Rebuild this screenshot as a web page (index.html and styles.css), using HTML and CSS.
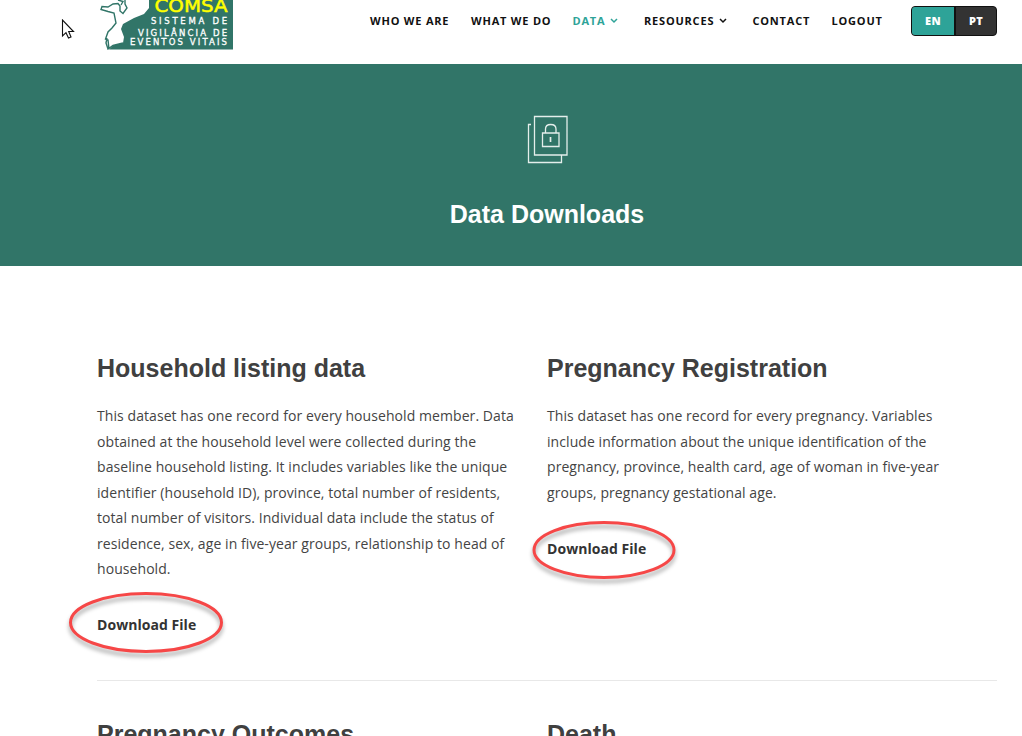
FILE: index.html
```html
<!DOCTYPE html>
<html lang="en">
<head>
<meta charset="utf-8">
<title>Data Downloads</title>
<link rel="stylesheet" href="styles.css">
</head>
<body>
<header class="header">
  <svg class="logo" width="136" height="50" viewBox="0 0 136 50">
    <path class="logo-green" d="M52 0H136V49.500H12L16 45.500L26 43L27 37L24 29L26 24L37 18L47 14L52 8Z"/>
    <path class="map-line" d="M12 49L11 40L8.500 39L11 32L15 28L19 23L17 13L11 11.500L4 9.500L5 6.500L11 7L16 4L21 3.500L23 6V11L26 13.500L30 8L28 4V0M21 0L26 1.500L24 5M10 38L9 43L11 49L16 45.500L26 43"/>
    <text class="logo-name" x="57.500" y="11.800" textLength="73" lengthAdjust="spacingAndGlyphs">COMSA</text>
    <text class="logo-text" x="54" y="24.200" textLength="76" lengthAdjust="spacing">SISTEMA DE</text>
    <text class="logo-text" x="41" y="35.500" textLength="89" lengthAdjust="spacing">VIGILÂNCIA DE</text>
    <text class="logo-text" x="33" y="45.300" textLength="97" lengthAdjust="spacing">EVENTOS VITAIS</text>
  </svg>
  <nav class="nav">
    <a class="nav-item who">WHO WE ARE</a>
    <a class="nav-item what">WHAT WE DO</a>
    <a class="nav-item data">DATA<svg class="chevron" width="8" height="6" viewBox="0 0 8 6"><path d="M1 1L4 4L7 1"/></svg></a>
    <a class="nav-item resources">RESOURCES<svg class="chevron" width="8" height="6" viewBox="0 0 8 6"><path d="M1 1L4 4L7 1"/></svg></a>
    <a class="nav-item contact">CONTACT</a>
    <a class="nav-item logout">LOGOUT</a>
    <div class="languages"><a class="lang active">EN</a><a class="lang">PT</a></div>
  </nav>
</header>
<section class="hero">
  <svg class="hero-icon" width="42" height="50" viewBox="0 0 42 50">
    <path d="M7.500 1.500H40V40H7.500ZM4 9.500H1.500V47.500H34.500V40M15.500 18H32V31.500H15.500ZM18.500 18V14Q18.500 9.500 23.700 9.500Q29 9.500 29 14V18"/>
    <path class="keyhole" d="M23.500 22V27"/>
  </svg>
  <h1 class="hero-title">Data Downloads</h1>
</section>
<main class="content">
  <div class="row">
    <article class="dataset">
      <h2 class="title">Household listing data</h2>
      <p class="description">This dataset has one record for every household member. Data obtained at the household level were collected during the baseline household listing. It includes variables like the unique identifier (household ID), province, total number of residents, total number of visitors. Individual data include the status of residence, sex, age in five-year groups, relationship to head of household.</p>
      <div class="download"><a>Download File</a><svg class="ring ring-left" width="164" height="76" viewBox="0 0 164 76"><ellipse cx="80" cy="34.500" rx="75.500" ry="29"/></svg></div>
    </article>
    <article class="dataset">
      <h2 class="title">Pregnancy Registration</h2>
      <p class="description">This dataset has one record for every pregnancy. Variables include information about the unique identification of the pregnancy, province, health card, age of woman in five-year groups, pregnancy gestational age.</p>
      <div class="download second"><a>Download File</a><svg class="ring ring-right" width="154" height="74" viewBox="0 0 154 74"><ellipse cx="75" cy="33" rx="70" ry="27.500"/></svg></div>
    </article>
  </div>
  <div class="row next">
    <article class="dataset"><h2 class="title">Pregnancy Outcomes</h2></article>
    <article class="dataset"><h2 class="title">Death</h2></article>
  </div>
</main>
<svg class="cursor" width="14" height="21" viewBox="0 0 14 21"><path d="M1.500 1V17L5 13.700L7.500 19L10 18L7.700 12.500H12.500Z"/></svg>
</body>
</html>
```
FILE: styles.css
```css
* { box-sizing: border-box; }
body { margin: 0; height: 736px; overflow: hidden; position: relative; background: #fff; color: #444; font-family: "Open Sans", sans-serif; }
.header { height: 64px; padding: 0 25px 0 97px; display: flex; justify-content: space-between; align-items: flex-start; }
.logo { display: block; }
.logo-green { fill: #317568; }
.map-line { fill: none; stroke: #317568; stroke-width: 1.4; }
.logo-name { fill: #ff0; stroke: #ff0; stroke-width: .5; font: 18px "DejaVu Sans", sans-serif; }
.logo-text { fill: #fff; stroke: #fff; stroke-width: .3; font: 8.5px "DejaVu Sans", sans-serif; }
.nav { display: flex; align-items: center; padding-top: 6px; height: 36px; }
.nav-item { color: #111; font-size: 11px; font-weight: 700; line-height: 30px; letter-spacing: .8px; white-space: nowrap; }
.who { width: 101px; }
.what { width: 101.5px; }
.data { width: 71.5px; color: #2ea398; }
.resources { width: 108.5px; }
.contact { width: 79px; }
.logout { width: 79.5px; }
.chevron { margin-left: 5px; vertical-align: 1px; }
.chevron path { fill: none; stroke: currentColor; stroke-width: 1.5; }
.languages { display: flex; width: 86px; height: 30px; border: 1px solid #111; border-radius: 4px; overflow: hidden; background: #333; }
.lang { flex: 1; color: #fff; font-size: 11px; font-weight: 800; line-height: 28px; letter-spacing: .3px; text-align: center; }
.active { flex: 0 0 44px; background: #2ea398; border-right: 2px solid #111; }
.hero { height: 202px; padding: 51px 0 0 73px; background: #317568; display: flex; flex-direction: column; align-items: center; }
.hero-icon { fill: none; stroke: #e4eeeb; stroke-width: 1.3; }
.keyhole { stroke-width: 1.7; }
.hero-title { margin: 33px 1px 0 0; color: #fff; font: 700 25px/32px "Liberation Sans", Arial, sans-serif; }
.content { height: 470px; overflow: hidden; padding: 84px 25px 0 97px; }
.row { display: grid; grid-template-columns: 425px 420px; column-gap: 25px; height: 331px; border-bottom: 1px solid #e8e8e8; }
.title { margin: 0; color: #404040; font: 700 25px/36px "Liberation Sans", Arial, sans-serif; white-space: nowrap; }
.description { margin: 17px 0 0; font-size: 14px; line-height: 25.5px; letter-spacing: .07px; }
.download { position: relative; width: 101px; margin-top: 30px; color: #333; font-size: 14px; font-weight: 700; line-height: 26px; letter-spacing: .05px; white-space: nowrap; }
.second { margin-top: 31px; }
.ring { position: absolute; overflow: visible; fill: none; stroke: #f64747; stroke-width: 3; filter: drop-shadow(0 4px 2px rgba(0,0,0,.35)); }
.ring-left { left: -31px; top: -24px; }
.ring-right { left: -18.500px; top: -19px; }
.next { height: 55px; padding-top: 35px; border: 0; }
.cursor { position: absolute; left: 61px; top: 19px; fill: #fff; stroke: #111; stroke-width: 1.1; }
```
